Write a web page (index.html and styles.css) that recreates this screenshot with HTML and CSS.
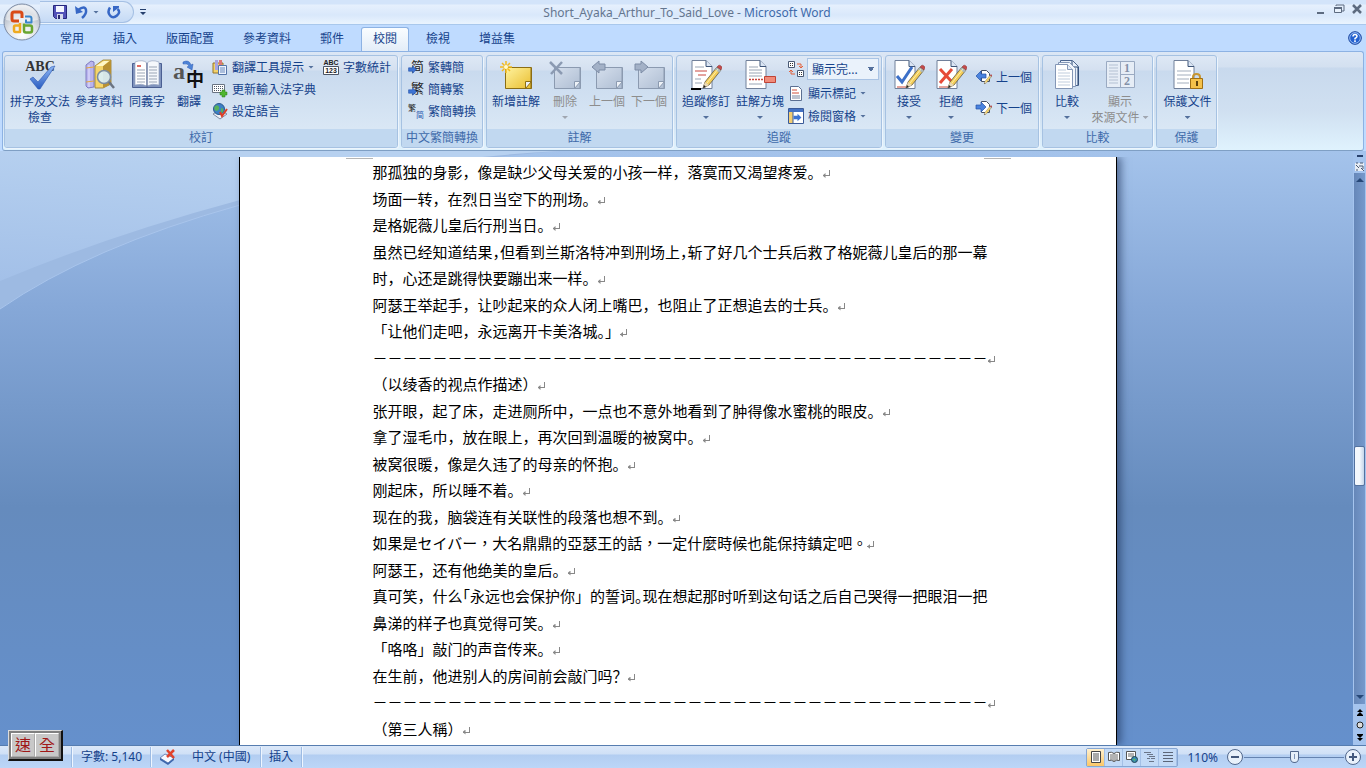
FILE: index.html
```html
<!DOCTYPE html>
<html lang="zh-Hant">
<head>
    <meta charset="UTF-8">
    <meta name="viewport" content="width=device-width, initial-scale=1.0">
    <title>Short_Ayaka_Arthur_To_Said_Love - Microsoft Word</title>
    <link rel="stylesheet" href="styles.css">
</head>
<body>

<!-- shared icon shapes -->
<svg class="defs" width="0" height="0" aria-hidden="true">
    <defs>
        <linearGradient id="gNote" x1="0" y1="0" x2="1" y2="1"><stop offset="0" stop-color="#fff3a0"/><stop offset="1" stop-color="#e9bd2e"/></linearGradient>
        <linearGradient id="gGrey" x1="0" y1="0" x2="1" y2="1"><stop offset="0" stop-color="#d5dfed"/><stop offset="1" stop-color="#aebdd2"/></linearGradient>
        <linearGradient id="gBlue" x1="0" y1="0" x2="0" y2="1"><stop offset="0" stop-color="#8fb8f5"/><stop offset="1" stop-color="#2a5cc0"/></linearGradient>
        <symbol id="page" viewBox="0 0 32 32">
            <path d="M5 1.5h14l6 6v22H5z" fill="#fff" stroke="#71809a"/>
            <path d="M19 1.5v6h6" fill="#dbe6f5" stroke="#3d5478"/>
        </symbol>
        <symbol id="pencil" viewBox="0 0 32 32">
            <path d="M13 29l2-6L27 8l4 3-12 15z" fill="#f3cd59" stroke="#5f5740" stroke-width=".8"/>
            <path d="M15 23l4 3-6 3z" fill="#ead9b5"/><path d="M13 29l1-3 2 2z" fill="#222"/>
            <path d="M25 10.500l4 3 2-2.500-4-3z" fill="#aab7bd"/><path d="M27 8l1.500-1.500q1-.8 2.500.5t.8 2.300L31 11z" fill="#c54a4a" stroke="#843030" stroke-width=".5"/>
            <path d="M17 24L28 10" stroke="#fff0a8"/>
        </symbol>
        <symbol id="note" viewBox="0 0 32 32">
            <path d="M5.500 8.500h26v21h-26z" stroke="currentColor"/>
            <path d="M31.500 22.500h-6v7z" fill="#eef2f7" stroke="currentColor"/><path d="M31 9v20.500H6" fill="none" stroke="currentColor"/>
        </symbol>
        <symbol id="arrow" viewBox="0 0 16 16"><path d="M1 5h7V1.500L15 8l-7 6.500V11H1z"/></symbol>
    </defs>
</svg>

<header class="titlebar">
    <div class="quick">
        <button class="qbtn" aria-label="儲存"><svg width="14" height="14" viewBox="0 0 14 14"><path d="M.5.5h13v13h-11l-2-2z" fill="#5252b8" stroke="#26267c"/><path d="M3 1h8v6H3z" fill="#f4f6ff"/><path d="M4 9h6v5H4z" fill="#d4d8ec"/><path d="M5 10h2v4H5z" fill="#2a2a70"/></svg></button>
        <button class="qbtn undo" aria-label="復原"><svg width="13" height="14" viewBox="0 0 13 14"><path d="M3 5q7-5 8 0 .8 4-4 8" fill="none" stroke="#3767c5" stroke-width="2.500"/><path d="M0 1l1 8 7-2z" fill="#3767c5"/></svg></button>
        <i class="drop"></i>
        <button class="qbtn redo" aria-label="重複"><svg width="13" height="14" viewBox="0 0 13 14"><path d="M3 2.500Q0 7 3 10.500t7 0 .5-6.500" fill="none" stroke="#3767c5" stroke-width="2.500"/><path d="M6 1h6v1.500L6 7z" fill="#3767c5"/></svg></button>
    </div>
    <button class="qmore" aria-label="自訂快速存取工具列"><svg width="6" height="6" viewBox="0 0 6 6"><path d="M0 0h6v1H0zM0 3h6L3 6z" fill="#26406e"/></svg></button>
    <h1 class="title">Short_Ayaka_Arthur_To_Said_Love - <span>Microsoft Word</span></h1>
    <div class="winbtns">
        <button aria-label="最小化"><svg width="14" height="12" viewBox="0 0 14 12"><path d="M3 9h7v2H3z" fill="#5d6b80"/></svg></button>
        <button aria-label="還原"><svg width="14" height="12" viewBox="0 0 14 12"><path d="M4 3V2h8v6h-2" fill="none" stroke="#5d6b80"/><path d="M2.500 4.500h7v5h-7z" fill="#e8f1fc" stroke="#5d6b80"/><path d="M2 4h8v2H2z" fill="#5d6b80"/></svg></button>
        <button aria-label="關閉"><svg width="14" height="12" viewBox="0 0 14 12"><path d="M3 2l8 8M11 2l-8 8" stroke="#5d6b80" stroke-width="2.500"/></svg></button>
    </div>
</header>

<button class="office" aria-label="Office 按鈕">
    <svg width="40" height="40" viewBox="0 0 40 40">
        <defs><radialGradient id="gOrb" cx=".5" cy=".85" r=".9"><stop offset="0" stop-color="#fff"/><stop offset=".45" stop-color="#dfe3e9"/><stop offset=".7" stop-color="#b9c0cb"/><stop offset="1" stop-color="#f4f6f9"/></radialGradient></defs>
        <circle cx="20" cy="20" r="18" fill="url(#gOrb)" stroke="#7c8ba4"/>
        <path d="M4 18a16 15 0 0 1 32 0q-16 4-32 0z" fill="#fff" opacity=".5"/>
        <g fill="none" stroke-linejoin="round">
            <path d="M17 19h-5q-2 0-2-2v-5q0-2 2-2h6q2 0 2 2v4" stroke="#d94a16" stroke-width="3"/>
            <path d="M23 14.500h4.500q2 0 2 2v4H24v-3" stroke="#3a86cb" stroke-width="2"/>
            <path d="M18 23.500h-4.500q-1.500 0-1.500 1.500v3q0 2 1.500 2H18v-9" stroke="#efaa20" stroke-width="2.500"/>
            <path d="M22 23.500h6q2 0 2 2v3q0 2-2 2h-4q-2 0-2-2v-7" stroke="#6aa632" stroke-width="2.500"/>
        </g>
    </svg>
</button>

<nav class="tabs">
    <button class="tab">常用</button>
    <button class="tab">插入</button>
    <button class="tab">版面配置</button>
    <button class="tab">參考資料</button>
    <button class="tab">郵件</button>
    <button class="tab active">校閱</button>
    <button class="tab">檢視</button>
    <button class="tab">增益集</button>
    <button class="help" aria-label="說明"><svg width="14" height="14" viewBox="0 0 14 14"><circle cx="7" cy="7" r="6.300" fill="#2360cf" stroke="#1b449b"/><circle cx="7" cy="7" r="5.300" fill="none" stroke="#b6d3fb" stroke-width=".8"/><path d="M5 5.500Q5 3.500 7 3.500t2 1.800Q9 6.500 7 7.500v1" fill="none" stroke="#fff" stroke-width="1.500"/><path d="M6.200 9.300h1.600v1.600H6.200z" fill="#fff"/></svg></button>
</nav>

<div class="ribbon">
    <section class="group g-proof">
        <div class="tools">
            <button class="big w62">
                <svg width="32" height="32" viewBox="0 0 32 32"><text x="16" y="12" class="abc">ABC</text><path d="M6 20l3-2 5 5L27 8l4-1-15 23h-2z" fill="url(#gBlue)" stroke="#2a58b4" stroke-width=".6"/></svg>
                <span>拼字及文法<br>檢查</span>
            </button>
            <button class="big w56">
                <svg width="32" height="32" viewBox="0 0 32 32"><path d="M3 6l5-4 3 1v25l-6 1-2-2z" fill="#b9b5ee" stroke="#6d68b4" stroke-width=".8"/><path d="M6 6v22" stroke="#e4e2ff"/><path d="M3 9l8-1M3 23l8-1" stroke="#e5a73c"/><path d="M12 7l8-6h8v24l-8 4h-8z" fill="#f5d56b" stroke="#96782a" stroke-width=".8"/><path d="M20 7l8-6v24l-8 4z" fill="#b99132"/><path d="M13 7l8-5h5l-6 5z" fill="#fff7c8"/><circle cx="21" cy="18" r="6.500" fill="#d9effb" fill-opacity=".9" stroke="#7c8ca0" stroke-width="1.500"/><path d="M26 23l5 6" stroke="#6b7482" stroke-width="2.500"/></svg>
                <span>參考資料</span>
            </button>
            <button class="big w40">
                <svg width="32" height="32" viewBox="0 0 32 32"><path d="M1.500 4.500h29v24h-29z" fill="#7f93bd" stroke="#4a5f92"/><path d="M4 3q8-3 12 1v23q-5-3-12-1z" fill="#fff" stroke="#9aa8c2" stroke-width=".7"/><path d="M28 3q-8-3-12 1v23q5-3 12-1z" fill="#f5f8fc" stroke="#9aa8c2" stroke-width=".7"/><path d="M6 7h4" stroke="#d63b2f" stroke-width="1.500"/><path d="M6 11h8M6 14h8M6 17h8M6 20h8M6 23h8M18 8h8M18 11h8M18 14h8M18 17h8M18 20h8M18 23h8" stroke="#9aa5b5"/><path d="M16 4v24" stroke="#53658f"/></svg>
                <span>同義字</span>
            </button>
            <button class="big w44">
                <svg width="32" height="32" viewBox="0 0 32 32"><text x="0" y="20" class="la">a</text><text x="13" y="27" class="zh">中</text><path d="M10 3q6-3 8 3l2-1-1 6-5-3 2-1q-1-3-6-2z" fill="#4d83d6" stroke="#2a58b4" stroke-width=".5"/></svg>
                <span>翻譯</span>
            </button>
            <div class="col">
                <button class="small"><svg width="16" height="16" viewBox="0 0 16 16"><path d="M1 4h10v10H1z" fill="#f3d26a" stroke="#94752a"/><path d="M3 1h3v10H3z" fill="#a7a4e2"/><path d="M7 1h3v5H7z" fill="#d77"/><path d="M6.500 6.500h8v9h-8z" fill="#eef4fd" stroke="#5474a8"/><path d="M8 9h5M8 11h5M8 13h5" stroke="#6787bb"/></svg>翻譯工具提示<i class="drop"></i></button>
                <button class="small"><svg width="16" height="16" viewBox="0 0 16 16"><path d="M.5 3.500h12v8H.5z" fill="#fff" stroke="#6a7483"/><path d="M2 5.500h10M2 7.500h10M2 9.500h8" stroke="#4f5967" stroke-dasharray="1 1"/><path d="M10 9h3v2h2v3h-2v2h-3v-2H8v-3h2z" fill="#4fb52f" stroke="#2b7a18" stroke-width=".5"/></svg>更新輸入法字典</button>
                <button class="small"><svg width="16" height="16" viewBox="0 0 16 16"><path d="M1 11l7-4 7 4-7 5z" fill="#eef1f8" stroke="#7f8aa0"/><circle cx="7" cy="6" r="5.500" fill="#3d7fc4" stroke="#2b598d"/><path d="M3 3q3-2 4 1t-3 4q-3-2-1-5zM9 5q3 0 2 4l-2 1z" fill="#58b25a"/><path d="M8 9l2 4 5-7" fill="none" stroke="#dd3e25" stroke-width="2"/></svg>設定語言</button>
            </div>
            <div class="col second">
                <button class="small"><svg width="16" height="16" viewBox="0 0 16 16"><text x="8" y="6" class="tiny">ABC</text><path d="M.5 7.500h15v8H.500z" fill="#fff" stroke="#4c5564"/><text x="8" y="14" class="tiny">123</text></svg>字數統計</button>
            </div>
        </div>
        <h2>校訂</h2>
    </section>

    <section class="group g-conv">
        <div class="tools">
            <div class="col">
                <button class="small"><svg width="16" height="16" viewBox="0 0 16 16"><text x="3" y="12" class="zi">简</text><use href="#arrow" x="0" y="6" width="9" height="9" fill="#3d74d4" stroke="#2451a6"/></svg>繁轉簡</button>
                <button class="small"><svg width="16" height="16" viewBox="0 0 16 16"><text x="3" y="12" class="zi">繁</text><use href="#arrow" x="0" y="6" width="9" height="9" fill="#3d74d4" stroke="#2451a6"/></svg>簡轉繁</button>
                <button class="small"><svg width="16" height="16" viewBox="0 0 16 16"><text x="0" y="8" class="zi zs">繁</text><text x="8" y="15" class="zi zs blue">简</text></svg>繁簡轉換</button>
            </div>
        </div>
        <h2>中文繁簡轉換</h2>
    </section>

    <section class="group g-note">
        <div class="tools">
            <button class="big w58">
                <svg class="gold" width="32" height="32" viewBox="0 0 32 32"><use href="#note" fill="url(#gNote)"/><path d="M6 2v12M0 8h12M2 4l8 8M10 4l-8 8" stroke="#f3ba1d" stroke-width="1.500"/><circle cx="6" cy="8" r="2" fill="#fffbd0"/></svg>
                <span>新增註解</span>
            </button>
            <button class="big w40" disabled>
                <svg class="dim" width="32" height="32" viewBox="0 0 32 32"><use href="#note" fill="url(#gGrey)"/><path d="M1 3l12 12M13 3L2 15" stroke="#8b9ab2" stroke-width="2.500"/></svg>
                <span>刪除</span><i class="drop"></i>
            </button>
            <button class="big w44" disabled>
                <svg class="dim" width="32" height="32" viewBox="0 0 32 32"><use href="#note" fill="url(#gGrey)"/><path d="M1 8l7-6v3h6v6H8v3z" fill="#a3b1c7" stroke="#7d8ca6"/></svg>
                <span>上一個</span>
            </button>
            <button class="big w40" disabled>
                <svg class="dim" width="32" height="32" viewBox="0 0 32 32"><use href="#note" fill="url(#gGrey)"/><path d="M15 8L8 2v3H2v6h6v3z" fill="#a3b1c7" stroke="#7d8ca6"/></svg>
                <span>下一個</span>
            </button>
        </div>
        <h2>註解</h2>
    </section>

    <section class="group g-track">
        <div class="tools">
            <button class="big w54">
                <svg width="32" height="32" viewBox="0 0 32 32"><use href="#page" x="-3"/><path d="M5 8h9M5 20h6M5 24h7" stroke="#9aa5b5"/><path d="M5 12h12M8 16h8" stroke="#c9473f"/><path d="M1 30h10" stroke="#000" stroke-width="2"/><use href="#pencil"/></svg>
                <span>追蹤修訂</span><i class="drop"></i>
            </button>
            <button class="big w54">
                <svg width="32" height="32" viewBox="0 0 32 32"><use href="#page" x="-3"/><path d="M5 8h9M5 11h13M5 14h13M5 17h13M5 25h13" stroke="#9aa5b5"/><path d="M5 20.500h15" stroke="#c9473f" stroke-dasharray="2 1" stroke-width="1.500"/><path d="M20.500 17.500h11v6h-11z" fill="#f08b7a" stroke="#bf4336"/></svg>
                <span>註解方塊</span><i class="drop"></i>
            </button>
            <div class="col track">
                <div class="pick">
                    <label for="view"><svg width="16" height="16" viewBox="0 0 16 16"><path d="M.5.5h6v6h-6zM9.500 9.500h6v6h-6z" fill="#fff" stroke="#4a5a74"/><path d="M2 2h1v1H2zM4 2h1v1H4zM2 4h1v1H2zM4 4h1v1H4zM11 11h1v1h-1zM13 11h1v1h-1zM11 13h1v1h-1zM13 13h1v1h-1z" fill="#333"/><path d="M9 3h4v4M11 5l2 2 2-2M7 13H3V9M1 11l2-2 2 2" fill="none" stroke="#e2603a"/></svg></label>
                    <select id="view" aria-label="供檢閱的顯示"><option>顯示完...</option></select>
                </div>
                <button class="small"><svg width="16" height="16" viewBox="0 0 16 16"><path d="M2.500 1.500h8l3 3v11h-11z" fill="#fff" stroke="#5b6f92"/><path d="M4 5h5M4 8h7" stroke="#d04f3a"/><path d="M4 11h8M4 13h8" stroke="#7a87a0"/></svg>顯示標記<i class="drop"></i></button>
                <button class="small"><svg width="16" height="16" viewBox="0 0 16 16"><path d="M.5.500h15v15H.5z" fill="#fff" stroke="#3b5a98"/><path d="M1 1h14v3H1z" fill="#4472c4"/><path d="M1 4h4v11H1z" fill="#f3cd73"/><path d="M5 4v12" stroke="#3b5a98"/><use href="#arrow" x="5" y="5" width="9" height="9" fill="#3d74d4"/></svg>檢閱窗格<i class="drop"></i></button>
            </div>
        </div>
        <h2>追蹤</h2>
    </section>

    <section class="group g-change">
        <div class="tools">
            <button class="big w42">
                <svg width="32" height="32" viewBox="0 0 32 32"><use href="#page" x="-3"/><path d="M4 17l5 6L19 8" fill="none" stroke="#3c70c8" stroke-width="3"/><path d="M4 28h9" stroke="#c94a3d"/><use href="#pencil"/></svg>
                <span>接受</span><i class="drop"></i>
            </button>
            <button class="big w42">
                <svg width="32" height="32" viewBox="0 0 32 32"><use href="#page" x="-3"/><path d="M5 10l12 13M17 10L5 24" stroke="#e64a38" stroke-width="3"/><path d="M4 28h9" stroke="#c94a3d"/><use href="#pencil"/></svg>
                <span>拒絕</span><i class="drop"></i>
            </button>
            <div class="col two">
                <button class="small"><svg width="16" height="16" viewBox="0 0 16 16"><path d="M5.500 1.500h5l3 3v8h-8z" fill="#fff" stroke="#444f63"/><use href="#pencil" x="3" y="3" width="13" height="13"/><path d="M0 7l5-5v3h5v4H5v3z" fill="#4a83de" stroke="#2451a6" stroke-width=".7"/></svg>上一個</button>
                <button class="small"><svg width="16" height="16" viewBox="0 0 16 16"><path d="M5.500 1.500h5l3 3v8h-8z" fill="#fff" stroke="#444f63"/><use href="#pencil" x="3" y="3" width="13" height="13"/><path d="M10 7L5 2v3H0v4h5v3z" fill="#4a83de" stroke="#2451a6" stroke-width=".7"/></svg>下一個</button>
            </div>
        </div>
        <h2>變更</h2>
    </section>

    <section class="group g-compare">
        <div class="tools">
            <button class="big w44">
                <svg width="32" height="32" viewBox="0 0 32 32"><path d="M9.500 1.500h12l6 6v19h-18z" fill="#e8f0fa" stroke="#4a648e"/><path d="M21 2v6h6v18" fill="none" stroke="#24426f"/><path d="M7.500 3.500h11l6 6v18h-17z" fill="#f3f7fc" stroke="#8497b6"/><path d="M4.500 5.500h12l5 5v19h-17z" fill="#fff" stroke="#8497b6"/><path d="M16.500 5.500v5h5" fill="#e4ecf6" stroke="#8497b6"/><path d="M7 11h8M7 14h12M7 17h12M7 20h12M7 23h12M7 26h12" stroke="#c0cddd"/></svg>
                <span>比較</span><i class="drop"></i>
            </button>
            <button class="big w62" disabled>
                <svg width="32" height="32" viewBox="0 0 32 32"><path d="M2.500 2.500h28v26h-28z" fill="#e6edf6" stroke="#9aaac2"/><path d="M16.500 3v26M17 15.500h13" stroke="#9aaac2"/><path d="M5 6h9M5 9h9M5 12h9M5 15h9M5 18h9M5 21h9M5 24h9" stroke="#b3c0d2"/><text x="23" y="13" class="num">1</text><text x="23" y="26" class="num">2</text></svg>
                <span>顯示<br>來源文件<i class="drop side"></i></span>
            </button>
        </div>
        <h2>比較</h2>
    </section>

    <section class="group g-protect">
        <div class="tools">
            <button class="big w58">
                <svg width="32" height="32" viewBox="0 0 32 32"><use href="#page" x="-3"/><path d="M5 12h14M5 16h14M5 20h12M5 24h12" stroke="#a3aebd"/><path d="M21 20v-2q0-3 3.500-3t3.500 3v2" fill="none" stroke="#c79632" stroke-width="2"/><path d="M18.500 19.500h12v10h-12z" fill="#f5c14a" stroke="#a06f14"/><path d="M24 22h2v5h-2z" fill="#5f420c"/></svg>
                <span>保護文件</span><i class="drop"></i>
            </button>
        </div>
        <h2>保護</h2>
    </section>
</div>

<main class="workspace">
    <svg class="swoosh" width="900" height="160" viewBox="0 0 900 160" aria-hidden="true">
        <defs><linearGradient id="gSwoosh" x1="0" y1="1" x2=".3" y2="0"><stop offset="0" stop-color="#a3c0e8"/><stop offset="1" stop-color="#b7d1f0"/></linearGradient></defs>
        <path d="M0 0h560Q380 14 240 54 90 96 0 158z" fill="#9dbae2"/>
        <path d="M0 0h560Q380 10 240 49 110 84 0 130z" fill="url(#gSwoosh)"/>
        <path d="M0 158Q90 96 240 54" fill="none" stroke="#a9c5ec"/>
    </svg>
    <div class="canvas">
        <article class="page" lang="zh-Hans">
            <p>那孤独的身影，像是缺少父母关爱的小孩一样，落寞而又渴望疼爱。<i class="mark"></i></p>
            <p>场面一转，在烈日当空下的刑场。<i class="mark"></i></p>
            <p>是格妮薇儿皇后行刑当日。<i class="mark"></i></p>
            <p>虽然已经知道结果<span class="half">，</span>但看到兰斯洛特冲到刑场上<span class="half">，</span>斩了好几个士兵后救了格妮薇儿皇后的那一幕</p>
            <p>时，心还是跳得快要蹦出来一样。<i class="mark"></i></p>
            <p>阿瑟王举起手，让吵起来的众人闭上嘴巴，也阻止了正想追去的士兵。<i class="mark"></i></p>
            <p>「让他们走吧，永远离开卡美洛城。」<i class="mark"></i></p>
            <p>－－－－－－－－－－－－－－－－－－－－－－－－－－－－－－－－－－－－－－－－－<i class="mark"></i></p>
            <p>（以绫香的视点作描述）<i class="mark"></i></p>
            <p>张开眼，起了床，走进厕所中，一点也不意外地看到了肿得像水蜜桃的眼皮。<i class="mark"></i></p>
            <p>拿了湿毛巾，放在眼上，再次回到温暖的被窝中。<i class="mark"></i></p>
            <p>被窝很暖，像是久违了的母亲的怀抱。<i class="mark"></i></p>
            <p>刚起床，所以睡不着。<i class="mark"></i></p>
            <p>现在的我，脑袋连有关联性的段落也想不到。<i class="mark"></i></p>
            <p class="trad" lang="zh-Hant">如果是セイバー，大名鼎鼎的亞瑟王的話，一定什麼時候也能保持鎮定吧。<i class="mark"></i></p>
            <p>阿瑟王，还有他绝美的皇后。<i class="mark"></i></p>
            <p>真可笑，什么<span class="half">「</span>永远也会保护你」的誓词<span class="half">。</span>现在想起那时听到这句话之后自己哭得一把眼泪一把</p>
            <p>鼻涕的样子也真觉得可笑。<i class="mark"></i></p>
            <p>「咯咯」敲门的声音传来。<i class="mark"></i></p>
            <p>在生前，他进别人的房间前会敲门吗？<i class="mark"></i></p>
            <p>－－－－－－－－－－－－－－－－－－－－－－－－－－－－－－－－－－－－－－－－－<i class="mark"></i></p>
            <p>（第三人稱）<i class="mark"></i></p>
        </article>
    </div>
    <div class="scroll">
        <i class="split"></i>
        <svg class="ruler" width="10" height="10" viewBox="0 0 10 10"><path d="M0 1h9v8H0z" fill="#e8edf5"/><path d="M1 1h2M5 1h3M1 3l3 3M4 4h4v3M6 6l3 3M1 8h2" fill="none" stroke="#4b5a73"/></svg>
        <div class="track-bar">
            <button class="arrow" aria-label="向上捲動"><svg width="8" height="4" viewBox="0 0 8 4"><path d="M0 4l4-4 4 4z" fill="#274878"/></svg></button>
            <span class="above"></span>
            <span class="thumb"></span>
            <span class="below"></span>
            <button class="arrow" aria-label="向下捲動"><svg width="8" height="4" viewBox="0 0 8 4"><path d="M0 0h8L4 4z" fill="#274878"/></svg></button>
        </div>
        <svg width="6" height="7" viewBox="0 0 6 7"><path d="M3 0l3 3H0zM3 3l3 3H0zM0 6h6v1H0z"/></svg>
        <svg width="8" height="8" viewBox="0 0 8 8"><circle cx="4" cy="4" r="3" fill="#ddd" stroke="#222"/></svg>
        <svg width="6" height="7" viewBox="0 0 6 7"><path d="M0 0h6v1H0zM0 1h6L3 4zM0 4h6L3 7z"/></svg>
    </div>
</main>

<footer class="status">
    <span class="cell pages"></span>
    <span class="cell words">字數: 5,140</span>
    <span class="cell lang"><svg width="17" height="16" viewBox="0 0 17 16"><path d="M1 9l5-4 9 4-6 5z" fill="#f7f9ff" stroke="#6f86b6"/><path d="M1 9v2l8 5 6-5V9l-6 5z" fill="#3d66ad"/><path d="M8 1l7 8M15 1L8 8" stroke="#e0432d" stroke-width="2.500"/></svg>中文 (中國)</span>
    <span class="cell ins">插入</span>
    <div class="views">
        <button class="on" aria-label="整頁模式"><svg width="12" height="12" viewBox="0 0 12 12"><path d="M1.500.5h9v11h-9z" fill="#fff" stroke="#444"/><path d="M3 3h6M3 5h6M3 7h6M3 9h6" stroke="#555"/></svg></button>
        <button aria-label="閱讀"><svg width="12" height="12" viewBox="0 0 12 12"><path d="M.5 1.500q3-1 5.500 1 2.500-2 5.500-1v8q-3-1-5.500 1-2.500-2-5.500-1z" fill="#fff" stroke="#555"/><path d="M6 2v9M2 4h3M2 6h3M7 4h3M7 6h3M7 8h3M2 8h3" stroke="#666"/></svg></button>
        <button aria-label="Web 版面"><svg width="12" height="12" viewBox="0 0 12 12"><path d="M.5 .5h9v8h-9z" fill="#fff" stroke="#555"/><path d="M2 3h6M2 5h6" stroke="#666"/><circle cx="8.500" cy="8.500" r="3" fill="#3c8fb0" stroke="#245"/><path d="M7 8h2v2z" fill="#6c4"/></svg></button>
        <button aria-label="大綱模式"><svg width="12" height="12" viewBox="0 0 12 12"><path d="M0 1.500h7M3 3.500h6M5 5.500h6M3 7.500h3M7 7.500h4M5 10.500h5" stroke="#6b7688"/></svg></button>
        <button aria-label="草稿"><svg width="12" height="12" viewBox="0 0 12 12"><path d="M1 1.500h10M1 4.500h10M1 7.500h10M1 10.500h10" stroke="#5b6678"/></svg></button>
    </div>
    <label class="percent" for="zoom">110%</label>
    <button class="round" aria-label="縮小"><svg width="18" height="18" viewBox="0 0 18 18"><circle cx="9" cy="9" r="7.500" fill="#e9f1fb" stroke="#51678c"/><path d="M5 8h8v2H5z" fill="#44597d"/></svg></button>
    <input id="zoom" type="range" min="0" max="100" value="50">
    <button class="round" aria-label="放大"><svg width="18" height="18" viewBox="0 0 18 18"><circle cx="9" cy="9" r="7.500" fill="#e9f1fb" stroke="#51678c"/><path d="M5 8h8v2H5zM8 5h2v8H8z" fill="#44597d"/></svg></button>
    <div class="ime"><button>速</button><button>全</button></div>
</footer>

</body>
</html>
```

FILE: styles.css
```css
* {
    box-sizing: border-box;
}
body {
    margin: 0;
    height: 100vh;
    display: flex;
    flex-direction: column;
    overflow: hidden;
    position: relative;
    font-family: "Noto Sans", "Noto Sans CJK TC", sans-serif;
    font-size: 12px;
    color: #15428b;
    background: #bfdbff;
}
button {
    font: inherit;
    color: inherit;
    background: none;
    border: 0;
    padding: 0;
}
h1, h2, p {
    margin: 0;
    font-weight: normal;
}
svg {
    display: block;
    flex: none;
    overflow: visible;
}
.defs {
    position: absolute;
}

/* title bar */
.titlebar {
    height: 25px;
    flex: none;
    display: flex;
    align-items: center;
    background: linear-gradient(#d3e4fa 0, #d3e4fa 4px, #e6f0fd 5px, #d9e8fb 15px, #eaf4fe 24px);
    border-bottom: 1px solid #a9c8ec;
}
.quick {
    height: 22px;
    width: 94px;
    margin-left: 40px;
    padding-left: 13px;
    display: flex;
    align-items: center;
    border: 1px solid #a5c0e4;
    border-left: 0;
    border-radius: 0 11px 11px 0;
    background: linear-gradient(#e2edfb, #c5daf5);
}
.undo {
    margin-left: 8px;
}
.quick .drop {
    margin-left: 5px;
}
.redo {
    margin-left: 8px;
}
.qmore {
    margin-left: 6px;
}
.title {
    flex: 1;
    text-align: center;
    font-size: 12px;
    color: #65768f;
}
.title span {
    color: #3e6aaa;
}
.winbtns {
    display: flex;
    gap: 4px;
    padding: 0 2px 6px 0;
    margin-left: 86px;
}
.office {
    position: absolute;
    left: 2px;
    top: 2px;
}
.drop {
    display: inline-block;
    flex: none;
    width: 6px;
    height: 3px;
    background: #54709c;
    clip-path: polygon(0 0, 100% 0, 50% 100%);
}

/* tabs */
.tabs {
    height: 26px;
    flex: none;
    display: flex;
    align-items: flex-end;
    gap: 5px;
    padding: 0 4px 0 48px;
    background: #bfdbff;
}
.tab {
    height: 24px;
    padding: 0 11px 3px;
    border: 1px solid transparent;
    border-bottom: 0;
    border-radius: 3px 3px 0 0;
}
.tab.active {
    background: linear-gradient(#fafdff, #e3edf8);
    border-color: #8db2e3;
}
.help {
    margin: 0 0 6px auto;
}

/* ribbon */
.ribbon {
    height: 100px;
    flex: none;
    display: flex;
    gap: 3px;
    padding: 3px 1px;
    margin: 0 2px;
    border: 1px solid #8db2e3;
    border-bottom-color: #7f9fc4;
    border-radius: 3px;
    background: linear-gradient(#dce7f5 0, #d3e0f0 15px, #c8d9ed 16px, #d0e0f1 60px, #dff2fd 97px);
}
.group {
    display: flex;
    flex-direction: column;
    height: 93px;
    flex: none;
    border: 1px solid #a6c2e2;
    border-radius: 3px;
    box-shadow: 1px 1px 0 #edf5fd;
    background: linear-gradient(#dee8f5 0, #d4e0f0 14px, #c9daee 15px, #d9e7f5 72px);
}
.g-proof {
    width: 394px;
}
.g-conv {
    width: 82px;
}
.g-note {
    width: 187px;
}
.g-track {
    width: 206px;
}
.g-change {
    width: 154px;
}
.g-compare {
    width: 111px;
}
.g-protect {
    width: 61px;
}
.group h2 {
    height: 18px;
    line-height: 17px;
    font-size: 12px;
    text-align: center;
    color: #3e6aaa;
    background: #c1d8f0;
    border-radius: 0 0 2px 2px;
    white-space: nowrap;
}
.tools {
    flex: 1;
    display: flex;
    padding: 2px 0 0 2px;
}
.g-note .tools {
    padding-left: 0;
}
.big {
    display: flex;
    flex-direction: column;
    align-items: center;
    padding-top: 1px;
    line-height: 16px;
    text-align: center;
    white-space: nowrap;
}
.big span {
    margin-top: 3px;
}
.big > .drop {
    margin-top: 6px;
}
.big:disabled {
    color: #8d8d8d;
}
.big:disabled .drop {
    background: #a0a6b0;
}
.drop.side {
    margin-left: 3px;
    vertical-align: 3px;
}
.w40 { width: 40px; }
.w42 { width: 42px; }
.w44 { width: 44px; }
.w54 { width: 54px; }
.w56 { width: 56px; }
.w58 { width: 58px; }
.w62 { width: 62px; }
.gold {
    color: #8b6d14;
}
.dim {
    color: #8b9ab0;
}
.col {
    display: flex;
    flex-direction: column;
    margin-top: -2px;
    padding-left: 4px;
}
.g-proof .col {
    padding-left: 1px;
}
.g-proof .second {
    padding-left: 7px;
}
.g-proof .w62 {
    margin-left: 2px;
}
.small {
    display: flex;
    align-items: center;
    gap: 4px;
    height: 22px;
    white-space: nowrap;
}
.col.two {
    padding-top: 10px;
    gap: 9px;
}
.col.track {
    flex: 1;
    gap: 1px;
    margin-top: 0;
    padding: 0 2px 0 1px;
}
.pick {
    display: flex;
    align-items: center;
    gap: 3px;
    margin-bottom: 1px;
}
.pick select {
    flex: 1;
    height: 22px;
    padding: 0 4px;
    font: inherit;
    color: inherit;
    appearance: none;
    border: 1px solid #a9c3e4;
    border-radius: 0;
    background: conic-gradient(from 315deg at 50% 100%, #54709c 90deg, transparent 0) right 3px center / 8px 4px no-repeat #eaf2fb;
}
.abc {
    font: bold 14px "Liberation Serif", serif;
    text-anchor: middle;
    fill: #333;
}
.la {
    font: bold 24px "Liberation Serif", serif;
    fill: #555;
}
.zh {
    font: bold 18px "Noto Sans CJK TC", sans-serif;
    fill: #111;
}
.tiny {
    font: bold 7px "Liberation Sans", sans-serif;
    text-anchor: middle;
    fill: #222;
}
.zi {
    font: 13px "Noto Sans CJK SC", sans-serif;
    fill: #222;
}
.zs {
    font-size: 8px;
}
.blue {
    fill: #2a5ab0;
}
.num {
    font: bold 12px "Liberation Serif", serif;
    text-anchor: middle;
    fill: #8391a8;
}

/* document area */
.workspace {
    flex: 1;
    min-height: 0;
    display: flex;
    position: relative;
    padding-top: 6px;
    background: linear-gradient(#a4c3eb 0, #86a8d8 26%, #658bbd 60%, #6590cc 100%);
}
.swoosh {
    position: absolute;
    left: 0;
    top: 0;
}
.canvas {
    flex: 1;
    display: flex;
    justify-content: center;
    position: relative;
    padding-left: 2px;
    overflow: hidden;
}
.page {
    width: 878px;
    padding: 2px 0 0 133px;
    border: 1px solid #000;
    border-width: 0 1px;
    box-shadow: 4px 0 8px rgba(30, 50, 90, .6);
    font-family: "Noto Sans CJK SC", sans-serif;
    font-size: 15px;
    color: #000;
    background:
        linear-gradient(#b5b5b5, #b5b5b5) 106px 1px / 27px 1px no-repeat,
        linear-gradient(#b5b5b5, #b5b5b5) 744px 1px / 27px 1px no-repeat,
        #fff;
}
.page p {
    display: flex;
    align-items: center;
    height: 26px;
    line-height: 26px;
    white-space: nowrap;
}
.page p:nth-child(even) {
    height: 27px;
}
.page .trad {
    font-family: "Noto Sans CJK TC", sans-serif;
}
.half {
    font-feature-settings: "halt";
}
.mark {
    width: 7px;
    height: 6px;
    margin-top: 2px;
    border: solid #888;
    border-width: 0 1px 1px 0;
    position: relative;
}
.mark::before {
    content: "";
    position: absolute;
    left: 0;
    bottom: -3px;
    width: 3px;
    height: 5px;
    background: #888;
    clip-path: polygon(0 50%, 100% 0, 100% 100%);
}

/* scroll bar */
.scroll {
    width: 13px;
    display: flex;
    flex-direction: column;
    align-items: center;
    gap: 5px;
    padding-bottom: 4px;
    position: relative;
    background: #a5c4ee;
    margin-top: -6px;
}
.split {
    width: 6px;
    height: 2px;
    margin-top: 4px;
    background: #27406c;
}
.ruler {
    margin-bottom: -4px;
}
.track-bar {
    flex: 1;
    width: 11px;
    display: flex;
    flex-direction: column;
    background: linear-gradient(90deg, #6687b8, #7699cc);
}
.arrow {
    height: 14px;
    display: flex;
    align-items: center;
    justify-content: center;
}
.above {
    flex: 262;
}
.thumb {
    height: 40px;
    border: 1px solid #54729f;
    border-radius: 2px;
    background: linear-gradient(90deg, #f4f8fd 50%, #c6d6ea);
}
.below {
    flex: 206;
}

/* status bar */
.status {
    height: 23px;
    flex: none;
    display: flex;
    align-items: center;
    position: relative;
    padding-right: 4px;
    border-top: 1px solid #567db0;
    background: linear-gradient(#dbe8f9 0, #cfe0f6 8px, #b2cdf1 9px, #bcd6f7 22px);
}
.cell {
    height: 20px;
    line-height: 20px;
    display: flex;
    align-items: center;
    padding-left: 9px;
    border-right: 1px solid #9dbbe3;
    box-shadow: 1px 0 0 #eff6ff;
    white-space: nowrap;
}
.pages {
    width: 72px;
}
.words {
    width: 79px;
}
.lang {
    width: 110px;
    padding-left: 8px;
    gap: 16px;
}
.ins {
    width: 41px;
    padding-left: 8px;
}
.views {
    display: flex;
    margin-left: auto;
    border: 1px solid #86a6d3;
    border-radius: 2px;
    background: #c3daf6;
}
.views button {
    width: 18px;
    height: 17px;
    display: flex;
    align-items: center;
    justify-content: center;
    border-right: 1px solid #a4c0e6;
}
.views .on {
    background: linear-gradient(#fff0cf, #fbc767);
}
.percent {
    margin: 0 8px 0 9px;
}
#zoom {
    width: 100px;
    height: 16px;
    margin: 0;
    appearance: none;
    background: linear-gradient(#6583b0, #6583b0) center / 100% 1px no-repeat;
}
#zoom::-webkit-slider-thumb {
    appearance: none;
    width: 9px;
    height: 12px;
    border: 1px solid #51678c;
    border-radius: 1px 1px 5px 5px;
    background: linear-gradient(#7f95b8, #7f95b8) center 2px / 1px 5px no-repeat #e6effa;
}
.ime {
    position: absolute;
    left: 8px;
    bottom: 7px;
    display: flex;
    padding: 2px;
    border: 1px solid #dcdcdc;
    border-right: 2px solid #111;
    border-bottom: 2px solid #111;
    background: #808080;
}
.ime button {
    width: 24px;
    height: 24px;
    line-height: 20px;
    font-size: 16px;
    color: #a01818;
    background: #c8c8c8;
    border: 1px outset #fff;
}
```
